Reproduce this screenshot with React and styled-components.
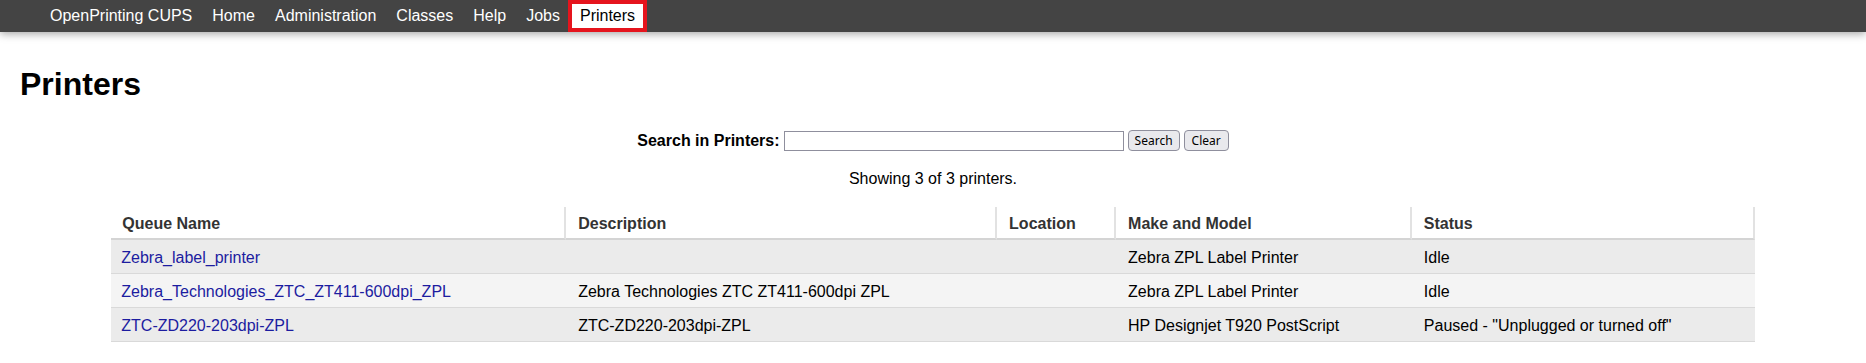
import React from 'react'
import styled, { createGlobalStyle } from 'styled-components'

const GlobalStyle = createGlobalStyle`
  html, body {
    margin: 0;
    padding: 0;
    background: #fff;
    font-family: "Liberation Sans", Arial, sans-serif;
    font-size: 16px;
    color: #000;
  }
`

const NavBar = styled.nav`
  height: 32px;
  background: #444;
  box-shadow: 0 2px 8px rgba(0, 0, 0, 0.35);
  display: flex;
  align-items: stretch;
  padding-left: 40px;
  position: relative;
  z-index: 1;
`

const NavItem = styled.a`
  display: flex;
  align-items: center;
  padding: 0 ${({ active }) => (active ? '12px' : '10px')};
  margin: 0 ${({ active }) => (active ? '-2px' : '0')};
  color: ${({ active }) => (active ? '#000' : '#fff')};
  background: ${({ active }) => (active ? '#fff' : 'transparent')};
  box-shadow: ${({ active }) => (active ? 'inset 0 0 0 4px #e5141d' : 'none')};
  text-decoration: none;
  font-size: 16px;
  white-space: nowrap;
`

const Main = styled.main`
  padding: 0 20px;
`

const Title = styled.h1`
  margin: 34px 0 0;
  font-size: 32px;
  line-height: 36px;
  font-weight: bold;
`

const SearchForm = styled.form`
  margin-top: 28px;
  height: 21px;
  display: flex;
  align-items: center;
  justify-content: center;
  gap: 4px;
`

const SearchLabel = styled.label`
  font-weight: bold;
  font-size: 16px;
`

const SearchInput = styled.input`
  box-sizing: border-box;
  width: 340px;
  height: 20px;
  border: 1px solid #8f8f9d;
  border-radius: 0;
  padding: 0 3px;
  margin: 0;
  background: #fff;
`

const FormButton = styled.button`
  box-sizing: border-box;
  height: 21px;
  padding: 0 ${({ pad }) => pad || 6}px;
  margin: 0;
  border: 1px solid #8f8f9d;
  border-radius: 4px;
  background: #e9e9ed;
  color: #000;
  font-family: "Noto Sans", "DejaVu Sans", sans-serif;
  font-size: 12px;
  line-height: 19px;
`

const Summary = styled.p`
  margin: 18px 0 0;
  line-height: 19px;
  text-align: center;
`

const Table = styled.table`
  margin: 19px auto 0;
  width: 90%;
  table-layout: fixed;
  border-collapse: separate;
  border-spacing: 0;
`

const HeadCell = styled.th`
  text-align: left;
  font-weight: bold;
  color: #333;
  background: #fff;
  line-height: 20px;
  padding: 7px 12px 4px;
  border-bottom: 2px solid #d4d4d4;
  border-right: 2px solid #e2e2e2;
  white-space: nowrap;
  overflow: hidden;

  &:first-child {
    padding-left: 11px;
  }
`

const Row = styled.tr`
  background: ${({ odd }) => (odd ? '#ebebeb' : '#f4f4f4')};
`

const Cell = styled.td`
  line-height: 20px;
  padding: 8px 12px 5px;
  border-bottom: 1px solid #d9d9d9;
  white-space: nowrap;
  overflow: hidden;

  &:first-child {
    padding-left: 10px;
  }
`

const QueueLink = styled.a`
  color: #1c1ca0;
  text-decoration: none;
`

const navItems = ['OpenPrinting CUPS', 'Home', 'Administration', 'Classes', 'Help', 'Jobs', 'Printers']

const columns = [
  { label: 'Queue Name', width: '27.68%' },
  { label: 'Description', width: '26.22%' },
  { label: 'Location', width: '7.24%' },
  { label: 'Make and Model', width: '18%' },
  { label: 'Status', width: '20.86%' },
]

const printers = [
  {
    name: 'Zebra_label_printer',
    description: '',
    location: '',
    model: 'Zebra ZPL Label Printer',
    status: 'Idle',
  },
  {
    name: 'Zebra_Technologies_ZTC_ZT411-600dpi_ZPL',
    description: 'Zebra Technologies ZTC ZT411-600dpi ZPL',
    location: '',
    model: 'Zebra ZPL Label Printer',
    status: 'Idle',
  },
  {
    name: 'ZTC-ZD220-203dpi-ZPL',
    description: 'ZTC-ZD220-203dpi-ZPL',
    location: '',
    model: 'HP Designjet T920 PostScript',
    status: 'Paused - "Unplugged or turned off"',
  },
]

const App = () => {
  return (
    <>
      <GlobalStyle />
      <NavBar>
        {navItems.map((item) => (
          <NavItem key={item} href="#" active={item === 'Printers' ? 1 : 0}>
            {item}
          </NavItem>
        ))}
      </NavBar>
      <Main>
        <Title>Printers</Title>
        <SearchForm onSubmit={(e) => e.preventDefault()}>
          <SearchLabel htmlFor="q">Search in Printers:</SearchLabel>
          <SearchInput id="q" type="search" />
          <FormButton type="submit">Search</FormButton>
          <FormButton type="button" pad={7}>Clear</FormButton>
        </SearchForm>
        <Summary>Showing {printers.length} of {printers.length} printers.</Summary>
        <Table>
          <colgroup>
            {columns.map((c) => (
              <col key={c.label} style={{ width: c.width }} />
            ))}
          </colgroup>
          <thead>
            <tr>
              {columns.map((c) => (
                <HeadCell key={c.label}>{c.label}</HeadCell>
              ))}
            </tr>
          </thead>
          <tbody>
            {printers.map((p, i) => (
              <Row key={p.name} odd={i % 2 === 0 ? 1 : 0}>
                <Cell>
                  <QueueLink href="#">{p.name}</QueueLink>
                </Cell>
                <Cell>{p.description}</Cell>
                <Cell>{p.location}</Cell>
                <Cell>{p.model}</Cell>
                <Cell>{p.status}</Cell>
              </Row>
            ))}
          </tbody>
        </Table>
      </Main>
    </>
  )
}

export default App
